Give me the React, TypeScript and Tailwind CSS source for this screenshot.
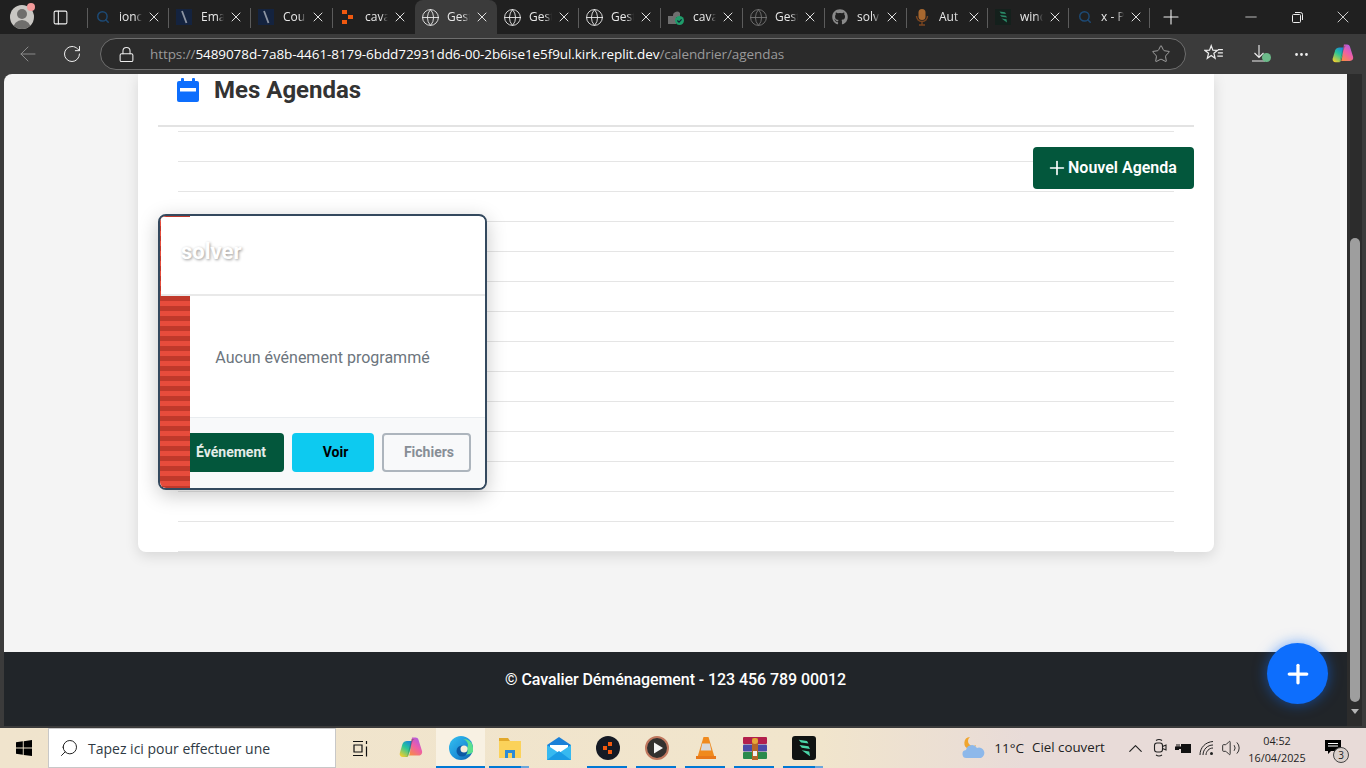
import React from "react";
import { ArrowLeft, ChevronUp, Globe, Lock, Minus, MoreHorizontal, PanelLeft, Plus, RotateCw, Search, Star, Volume2, X } from "lucide-react";
import { FaGithub } from "react-icons/fa";

const SearchFav = () => <Search className="w-[14px] h-[14px] ml-[2px] text-[#1d4a75]" strokeWidth={2.5} />;

const SlashFav = () => (
  <svg width="16" height="16" viewBox="0 0 16 16">
    <rect width="16" height="16" fill="#14233f" />
    <path d="M6 2l4.5 12" stroke="#8d95a3" strokeWidth="1.8" />
  </svg>
);

const OrangeFav = () => (
  <svg width="16" height="16" viewBox="0 0 16 16" fill="#f0590f">
    <rect x="2" y="1" width="5" height="4" />
    <rect x="8" y="6" width="5" height="4" />
    <rect x="2" y="11" width="5" height="4" />
  </svg>
);

const GlobeFav = ({ dim }: { dim?: boolean }) => (
  <Globe className={`w-[19px] h-[19px] shrink-0 ${dim ? "text-[#777]" : "text-[#f0f0f0]"}`} strokeWidth={1.1} />
);

const CheckFav = () => (
  <svg width="16" height="16" viewBox="0 0 16 16">
    <path d="M0 15V7h5a4 4 0 0 1 7-3v4H8v7z" fill="#6f6f6f" />
    <circle cx="11.500" cy="11.500" r="4.500" fill="#1f9d6a" />
    <path d="M9.400 11.500l1.600 1.600 2.600-2.800" stroke="#123" strokeWidth="1.200" fill="none" />
  </svg>
);

const MicFav = () => (
  <svg width="16" height="18" viewBox="0 0 16 18">
    <rect x="4.500" y="1" width="7" height="11" rx="3.500" fill="#a8682f" />
    <path d="M2.500 8a5.500 5.500 0 0 0 11 0M8 14v3M5 17h6" stroke="#7b4620" strokeWidth="1.400" fill="none" />
  </svg>
);

const LeafFav = ({ bright, size = 16 }: { bright?: boolean; size?: number }) => (
  <svg width={size} height={size} viewBox="0 0 16 16">
    <rect width="16" height="16" rx={bright ? 2 : 0} fill={bright ? "#101312" : "#14201c"} />
    <path d="M4.500 2.500l5.500.8 1 1.700-5-.6zM5 6l6 .8 1 1.800-5.500-.8zM6.500 9.500l5 .8.500 3.200z" fill={bright ? "#4bd6a8" : "#2a8a68"} />
  </svg>
);

const tabs: { label: string; icon: React.ReactNode; active?: boolean; noSep?: boolean; narrow?: boolean }[] = [
  { label: "ionc", icon: <SearchFav /> },
  { label: "Ema", icon: <SlashFav /> },
  { label: "Cou", icon: <SlashFav /> },
  { label: "cava", icon: <OrangeFav />, noSep: true },
  { label: "Gest", icon: <GlobeFav />, active: true, noSep: true },
  { label: "Gest", icon: <GlobeFav /> },
  { label: "Gest", icon: <GlobeFav /> },
  { label: "cava", icon: <CheckFav /> },
  { label: "Gest", icon: <GlobeFav dim /> },
  { label: "solv", icon: <FaGithub className="w-4 h-4 text-[#8a8a8a]" /> },
  { label: "Aut", icon: <MicFav />, narrow: true },
  { label: "wind", icon: <LeafFav />, narrow: true },
  { label: "x - P", icon: <SearchFav />, narrow: true },
];

function Tab({ label, icon, active, noSep, narrow }: (typeof tabs)[number]) {
  return (
    <div className={`relative h-[34px] shrink-0 flex items-center pl-[7px] ${narrow ? "w-[81px]" : "w-[82px]"} ${active ? "bg-[#3b3b3b] rounded-t-lg" : ""}`}>
      <div className="w-4 h-4 flex items-center justify-center shrink-0">{icon}</div>
      <span className="ml-[9px] w-[23px] overflow-hidden whitespace-nowrap text-[12px] text-[#e8e8e8] [mask-image:linear-gradient(to_right,black_70%,transparent)]">
        {label}
      </span>
      <X className="absolute left-[59px] top-[9px] w-[16px] h-[16px] text-[#eee]" strokeWidth={1.4} />
      {!active && !noSep && <span className="absolute right-0 top-[8px] h-[20px] w-px bg-[#5c5c5c]" />}
    </div>
  );
}

function TitleBar() {
  return (
    <div className="h-[34px] bg-[#202020] flex items-center shrink-0">
      <div className="relative w-[44px] shrink-0 flex justify-center">
        <div className="w-[24px] h-[24px] rounded-full bg-[#c9c7c3] overflow-hidden flex flex-col items-center">
          <div className="w-[10px] h-[10px] mt-[4px] rounded-full bg-[#6f6e6c]" />
          <div className="w-[18px] h-[10px] mt-[1px] rounded-t-full bg-[#6f6e6c]" />
        </div>
        <div className="absolute left-[27px] top-[-2px] w-[8px] h-[8px] rounded-full bg-[#f49b9b]" />
      </div>
      <div className="w-[32px] mr-[11px] shrink-0 flex justify-center">
        <PanelLeft className="w-[17px] h-[17px] text-[#f0f0f0]" strokeWidth={1.5} />
      </div>
      <div className="relative flex">
        <span className="absolute left-0 top-[8px] h-[20px] w-px bg-[#5c5c5c]" />
        {tabs.map((t, i) => (
          <Tab key={i} {...t} />
        ))}
      </div>
      <Plus className="ml-[9px] w-[24px] h-[24px] text-[#f0f0f0]" strokeWidth={1.1} />
      <div className="ml-auto flex items-center">
        <div className="w-[46px] flex justify-center"><Minus className="w-[18px] h-[18px] text-[#eee]" strokeWidth={1} /></div>
        <div className="w-[46px] flex justify-center">
          <svg width="11" height="11" viewBox="0 0 11 11" fill="none" stroke="#eee">
            <rect x="0.500" y="2.500" width="8" height="8" rx="1" />
            <path d="M3 .5h5.500a2 2 0 0 1 2 2V8" />
          </svg>
        </div>
        <div className="w-[46px] flex justify-center"><X className="w-[20px] h-[20px] text-[#eee]" strokeWidth={1} /></div>
      </div>
    </div>
  );
}

const CopilotIcon = ({ size = 22, id }: { size?: number; id: string }) => (
  <svg width={size} height={size} viewBox="0 0 24 24">
    <defs>
      <linearGradient id={`${id}a`} x1="0.800" y1="0" x2="0.200" y2="1">
        <stop offset="0" stopColor="#1a7fe0" />
        <stop offset="0.45" stopColor="#27c59a" />
        <stop offset="1" stopColor="#f0cf2e" />
      </linearGradient>
      <linearGradient id={`${id}b`} x1="0.800" y1="0" x2="0.200" y2="1">
        <stop offset="0" stopColor="#a65be8" />
        <stop offset="0.5" stopColor="#ee5ea8" />
        <stop offset="1" stopColor="#f78a4a" />
      </linearGradient>
    </defs>
    <path d="M8 5h6.500L9.500 19.500c-.5 1-1 1.500-2 1.500H4c-2.500 0-3.800-1.800-3.200-4L3.500 8C4.200 6 6 5 8 5z" fill={`url(#${id}a)`} />
    <path d="M13 1.500h3.500c1.500 0 2.500.8 3 2.200L23 15c.6 2.500-.8 4.500-3.500 4.500H10l.8-2z" fill={`url(#${id}b)`} />
    <path d="M12.500 3h3c-1 .5-1.500 1.200-2 2.500L9 19c-.5 1.300-1 2-2 2h-.5c1 0 1.600-.7 2-2z" fill="#3a3a3a" opacity=".35" />
  </svg>
);

function ToolBar() {
  return (
    <div className="h-[40px] bg-[#3b3b3b] flex items-center shrink-0">
      <div className="w-[56px] flex justify-center"><ArrowLeft className="w-[24px] h-[24px] text-[#8a8a8a]" strokeWidth={1} /></div>
      <div className="w-[32px] flex justify-center"><RotateCw className="w-[20px] h-[20px] text-[#eee]" strokeWidth={1.2} /></div>
      <div className="ml-[12px] w-[1086px] h-[32px] rounded-full bg-[#2b2b2b] border border-[#6e6e6e] flex items-center pl-[17px] pr-[14px]">
        <Lock className="w-[17px] h-[17px] text-[#eee]" strokeWidth={1.5} />
        <span className="ml-[15px] text-[13.500px] tracking-[-0.08px] text-white whitespace-nowrap">
          <span className="text-[#9a9a9a]">https://</span>
          5489078d-7a8b-4461-8179-6bdd72931dd6-00-2b6ise1e5f9ul.kirk.replit.dev
          <span className="text-[#9a9a9a]">/calendrier/agendas</span>
        </span>
        <Star className="ml-auto w-[20px] h-[20px] text-[#b5b5b5]" strokeWidth={1} />
      </div>
      <div className="ml-[17px] w-[22px] flex justify-center">
        <svg width="20" height="20" viewBox="0 0 18 18" fill="none" stroke="#eee" strokeWidth="1.100">
          <path d="M6.500 1.500l1.500 4 4.200.2-3.300 2.600 1.100 4.500-3.500-2.500L3 12.800l1.100-4.500L.8 5.700 5 5.500z" />
          <path d="M12.500 5H17M12.500 8H17M12 11h5" />
        </svg>
      </div>
      <div className="ml-[25px] relative w-[22px] flex justify-center">
        <svg width="16" height="20" viewBox="0 0 16 20" fill="none" stroke="#eee" strokeWidth="1.100" className="mr-[4px]">
          <path d="M8 1v12M3.500 9L8 13.500 12.500 9M1 17h13" />
        </svg>
        <span className="absolute left-[12px] top-[9px] w-[9px] h-[9px] rounded-full bg-[#6cbb8a]" />
      </div>
      <div className="ml-[18px] w-[22px] flex justify-center"><MoreHorizontal className="w-[17px] h-[17px] text-[#eee]" strokeWidth={2} /></div>
      <div className="ml-[20px]"><CopilotIcon id="cptool" /></div>
    </div>
  );
}

function AgendaCard() {
  return (
    <div className="relative mt-[25px] ml-[-20px] w-[329px] h-[276px] rounded-lg border-2 border-[#34495e] bg-white overflow-hidden shadow-[0_5px_20px_rgba(0,0,0,0.22)]">
      <div className="relative z-10 h-[79px] ml-px mt-px bg-white border-b-2 border-[#e9e9e9] pl-[20px] pt-[20px]">
        <div className="text-[22px] leading-[30px] font-bold text-white [text-shadow:1px_1px_3px_rgba(0,0,0,0.4)]">solver</div>
      </div>
      <div className="h-[121px] ml-[30px] pt-[2px] flex items-center justify-center pr-[30px]">
        <p className="text-[16px] text-[#6c757d] whitespace-nowrap">Aucun événement programmé</p>
      </div>
      <div className="h-[74px] bg-[#f8f9fa] border-t border-[#e9ecef] flex items-start justify-end gap-2 pr-[14px] pt-[15px]">
        <button className="h-[39px] pl-[25px] pr-[18px] rounded bg-[#03573c] text-[14px] font-bold text-[#e3ece8]">Événement</button>
        <button className="h-[39px] w-[82px] pl-[5px] rounded bg-[#0dcaf0] text-[14px] font-bold text-black">Voir</button>
        <button className="h-[39px] w-[89px] pl-[5px] rounded border-2 border-[#adb5bd] text-[14px] font-bold text-[#878e96]">Fichiers</button>
      </div>
      <div className="absolute left-0 top-0 bottom-0 w-[30px] bg-[repeating-linear-gradient(to_bottom,#c0392b_0,#c0392b_5px,#e74c3c_5px,#e74c3c_10px)]" />
    </div>
  );
}

const CalendarSolid = () => (
  <svg width="22" height="24" viewBox="0 0 22 24" className="mt-[1px] shrink-0" fill="#0d6efd">
    <rect x="4" y="0" width="3" height="5" rx="1" />
    <rect x="15" y="0" width="3" height="5" rx="1" />
    <path d="M2 3h18a2 2 0 0 1 2 2v17a2 2 0 0 1-2 2H2a2 2 0 0 1-2-2V5a2 2 0 0 1 2-2z" />
    <rect x="3" y="10" width="16" height="3.500" fill="#fff" />
  </svg>
);

function Page() {
  return (
    <div className="flex-1 min-w-0 flex flex-col bg-[#f4f4f4] rounded-tl-lg overflow-hidden">
      <main className="flex-1 min-h-0 pl-[134px]">
        <section className="w-[1076px] h-[478px] bg-white rounded-b-lg shadow-[0_4px_14px_rgba(0,0,0,0.12)] px-5 flex flex-col">
          <header className="h-[53px] shrink-0 border-b-2 border-[#e3e3e3] flex items-start pt-[3px] pl-[19px]">
            <CalendarSolid />
            <h1 className="ml-[15px] text-[24px] leading-[26px] font-bold text-[#333]">Mes Agendas</h1>
          </header>
          <div className="flex-1 mx-5 bg-[linear-gradient(to_bottom,transparent_29px,#e5e5e5_29px)] bg-[length:100%_30px] bg-[position:0_5px]">
            <div className="flex justify-end mr-[-20px] pt-[20px]">
              <button className="w-[161px] h-[42px] rounded bg-[#03573c] flex items-center pl-[13px] text-[16px] font-semibold text-white">
                <Plus className="w-[22px] h-[22px]" strokeWidth={1.8} />
                Nouvel Agenda
              </button>
            </div>
            <AgendaCard />
          </div>
        </section>
      </main>
      <footer className="h-[74px] shrink-0 bg-[#212529] flex justify-center pt-[18px]">
        <p className="text-[16px] leading-[20px] tracking-[-0.08px] font-medium text-white">© Cavalier Déménagement - 123 456 789 00012</p>
      </footer>
    </div>
  );
}

function Scrollbar() {
  return (
    <div className="w-[15px] shrink-0 bg-[#2c2c2c] flex flex-col items-center pt-[164px] pb-[12px]">
      <div className="w-[10px] flex-1 rounded-full bg-[#9e9e9e]" />
      <div className="mt-[7px] w-0 h-0 border-x-[4px] border-x-transparent border-t-[5px] border-t-[#b5b5b5]" />
    </div>
  );
}

const Slot = ({ children, bar, active }: { children: React.ReactNode; bar?: "full" | "stack"; active?: boolean }) => (
  <div className={`relative w-[49px] h-[40px] flex items-center justify-center ${active ? "bg-[#f8f1e3]" : ""}`}>
    {children}
    {bar === "full" && <span className="absolute left-[4px] bottom-0 h-[2px] w-[40px] bg-[#0078d4]" />}
    {bar === "stack" && (
      <>
        <span className="absolute left-[4px] bottom-0 h-[2px] w-[32px] bg-[#0078d4]" />
        <span className="absolute left-[36px] bottom-0 h-[2px] w-[8px] bg-[#6aa6dc]" />
      </>
    )}
    {active && <span className="absolute left-0 bottom-0 h-[2px] w-full bg-[#0078d4]" />}
  </div>
);

function Taskbar() {
  return (
    <div className="h-[40px] shrink-0 flex items-center bg-[linear-gradient(to_right,#f0e4cd_0,#f1e5cc_60%,#e8dbd8_75%,#e8dbd8_100%)] font-['Open_Sans',sans-serif] text-[#1f2a33]">
      <div className="w-[48px] h-full flex items-center justify-center">
        <svg width="16" height="16" viewBox="0 0 16 16" fill="#000">
          <path d="M0 2.300L6.800 1.300V7.600H0zM7.700 1.200L16 0V7.600H7.700zM0 8.500H6.800V14.800L0 13.800zM7.700 8.500H16V16L7.700 14.900z" />
        </svg>
      </div>
      <div className="w-[288px] h-full bg-white border border-[#c8c8c8] flex items-center pl-[10px]">
        <Search className="w-[20px] h-[20px] -scale-x-100 text-[#222]" strokeWidth={1.2} />
        <span className="ml-[9px] text-[14px] text-[#2f3a44] whitespace-nowrap">Tapez ici pour effectuer une</span>
      </div>
      <div className="w-[49px] flex justify-center">
        <svg width="17" height="17" viewBox="0 0 17 17" fill="none" stroke="#111" strokeWidth="1.200">
          <path d="M1 1.500h10M1 15.500h10M2 5h8v7H2zM14.500 1v3M14.500 6.500v10" />
        </svg>
      </div>
      <div className="w-[51px] flex justify-center"><CopilotIcon size={24} id="cptask" /></div>
      <Slot active>
        <svg width="24" height="24" viewBox="0 0 24 24">
          <defs>
            <linearGradient id="edge" x1="0" y1="0" x2="1" y2="1">
              <stop offset="0" stopColor="#35c1f1" />
              <stop offset="0.6" stopColor="#1b8fd8" />
              <stop offset="1" stopColor="#0c59a4" />
            </linearGradient>
          </defs>
          <circle cx="12" cy="12" r="12" fill="url(#edge)" />
          <path d="M24 12c0-6-5-9-10-9C19 5 20 9 18 12c-2 1-7 1-8-1 0 5 6 11 14 5z" fill="#5be08f" />
          <circle cx="13" cy="15" r="5.500" fill="#0c59a4" />
          <circle cx="15" cy="13" r="3.500" fill="#f6edd9" />
        </svg>
      </Slot>
      <Slot bar="stack">
        <svg width="24" height="22" viewBox="0 0 24 22">
          <path d="M1 1h9l2 3H1z" fill="#e2a92c" />
          <rect x="1" y="4" width="22" height="17" fill="#fbd25a" />
          <path d="M7 21v-8h10v8h-3v-5h-4v5z" fill="#2c8bd6" />
        </svg>
      </Slot>
      <Slot>
        <svg width="24" height="23" viewBox="0 0 24 23">
          <path d="M0 8L12 0l12 8v15H0z" fill="#1a80d8" />
          <path d="M3 8h18v4l-9 5-9-5z" fill="#fff" />
          <path d="M0 8l12 8 12-8v15H0z" fill="#36b9f0" />
          <path d="M0 23l12-9 12 9z" fill="#1a9be4" />
        </svg>
      </Slot>
      <Slot bar="full">
        <svg width="24" height="24" viewBox="0 0 24 24">
          <circle cx="12" cy="12" r="12" fill="#151a24" />
          <path d="M7 10h4v4H7zM12 6h4v4h-4zM12 14h4v4h-4z" fill="#f0590f" />
        </svg>
      </Slot>
      <Slot bar="full">
        <svg width="24" height="24" viewBox="0 0 24 24">
          <circle cx="12" cy="12" r="11" fill="#33312f" stroke="#c0785f" strokeWidth="2" />
          <path d="M9 6.500v11l9-5.500z" fill="#f4f4f4" />
        </svg>
      </Slot>
      <Slot bar="full">
        <svg width="20" height="24" viewBox="0 0 20 24">
          <path d="M7.500 1h5l6 20H1.500z" fill="#f08a1d" />
          <path d="M6.200 7.500h7.600l1.500 7H4.700z" fill="#d9d9d9" />
          <rect x="0" y="20" width="20" height="3" fill="#e8781a" />
        </svg>
      </Slot>
      <Slot bar="full">
        <svg width="24" height="24" viewBox="0 0 24 24">
          <rect x="0" y="1" width="24" height="7" rx="1" fill="#b21f4c" />
          <rect x="0" y="8.500" width="24" height="7" rx="1" fill="#4a4aa8" />
          <rect x="0" y="16" width="24" height="7" rx="1" fill="#2a8a4c" />
          <rect x="9" y="2" width="6" height="22" fill="#b5662a" />
          <rect x="10" y="15" width="4" height="5" fill="#f2f2f2" />
          <circle cx="12" cy="5" r="3" fill="#e6a63a" />
        </svg>
      </Slot>
      <Slot bar="stack"><LeafFav bright size={24} /></Slot>
      <div className="ml-auto flex items-center h-full">
        <svg width="24" height="24" viewBox="0 0 24 24" className="mr-[8px]">
          <path d="M8 1a6 6 0 1 0 6 8 5 5 0 0 1-6-8z" fill="#f0a52e" />
          <path d="M5 22a4 4 0 0 1-1-8 6 6 0 0 1 11-2 5 5 0 0 1 4 10z" fill="#8db8ea" />
        </svg>
        <span className="text-[13.500px] text-[#222]">11°C</span>
        <span className="ml-[8px] w-[74px] text-[13.300px] text-[#222] whitespace-nowrap">Ciel couvert</span>
        <ChevronUp className="ml-[18px] w-[23px] h-[23px] text-[#222]" strokeWidth={1.2} />
        <svg width="14" height="20" viewBox="0 0 14 20" className="ml-[6px]" fill="none" stroke="#222" strokeWidth="1.100">
          <rect x="1.500" y="5" width="8" height="9" rx="2.500" />
          <path d="M9.500 8.500L13 7v5l-3.500-1.500M3 2.500c2-1.300 4-1.300 6 0M3 17c2 1.300 4 1.300 6 0" />
        </svg>
        <svg width="16" height="12" viewBox="0 0 16 12" className="ml-[8px]">
          <path d="M0 4.500h1.500V2h1v2.500h1V2h1v2.500H6V7H4v1H0z" fill="#111" />
          <rect x="6.500" y="2.500" width="9" height="8" fill="#111" stroke="#111" />
        </svg>
        <svg width="16" height="16" viewBox="0 0 16 16" className="ml-[8px]" fill="none" stroke="#222" strokeWidth="1">
          <path d="M1 15C1 7.500 6.500 2 14 1.500M4 15c0-5.500 4.500-10 10-10M7 15c0-3.500 3-7 7-7" />
          <circle cx="12.500" cy="13.500" r="1.500" fill="#222" stroke="none" />
        </svg>
        <Volume2 className="ml-[6px] w-[20px] h-[20px] text-[#222]" strokeWidth={1.1} />
        <div className="ml-[3px] w-[66px] flex flex-col items-center text-[10.800px] leading-[17px] text-[#222] pt-[2px]">
          <span>04:52</span>
          <span className="whitespace-nowrap">16/04/2025</span>
        </div>
        <div className="relative w-[53px] h-full ml-[3px]">
          <svg width="16" height="15" viewBox="0 0 16 15" className="absolute left-[12px] top-[12px]">
            <path d="M0 0h16v11H6l-3 3v-3H0z" fill="#000" />
            <path d="M3 3.500h10M3 6h10" stroke="#fff" strokeWidth="1" />
          </svg>
          <span className="absolute left-[20px] top-[19px] w-[16px] h-[16px] rounded-full bg-[#d9cfcb] border border-[#444] text-[10px] leading-[14px] text-center text-[#222]">3</span>
        </div>
      </div>
    </div>
  );
}

export default function App() {
  return (
    <div className="relative w-[1366px] h-[768px] overflow-hidden bg-[#3b3b3b] flex flex-col font-['Roboto',sans-serif]">
      <div className="font-['Open_Sans',sans-serif]">
        <TitleBar />
        <ToolBar />
      </div>
      <div className="flex-1 min-h-0 flex pl-[4px] pr-[4px] pb-[2px]">
        <Page />
        <Scrollbar />
      </div>
      <Taskbar />
      {/* floating add button */}
      <button className="absolute left-[1267px] top-[643px] w-[61px] h-[61px] rounded-full bg-[#0d6efd] flex items-center justify-center text-white shadow-[0_0_14px_rgba(13,110,253,0.55)]">
        <Plus className="w-[30px] h-[30px]" strokeWidth={2.6} />
      </button>
    </div>
  );
}
